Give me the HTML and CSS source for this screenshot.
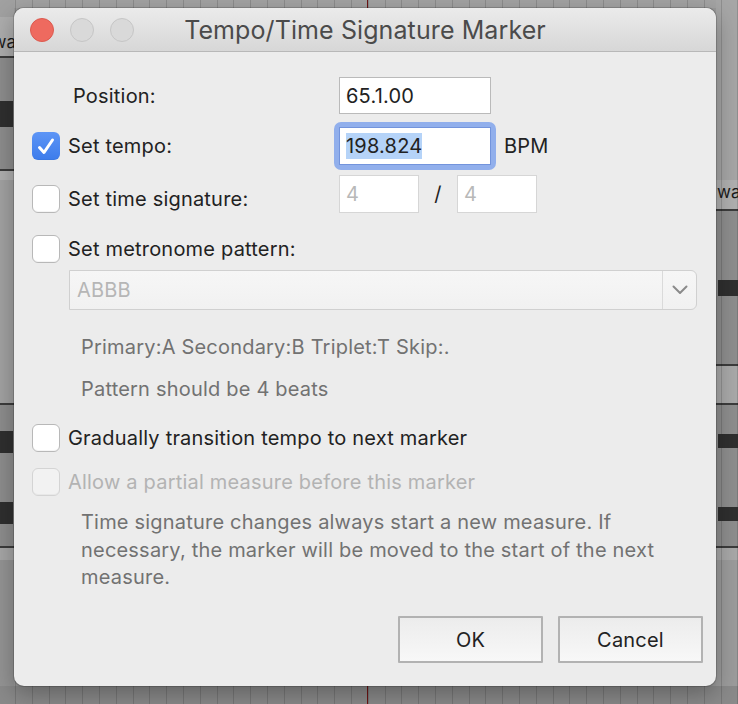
FILE: index.html
```html
<!DOCTYPE html>
<html lang="en">
<head>
<meta charset="UTF-8">
<meta name="viewport" content="width=device-width, initial-scale=1.0">
<title>Tempo/Time Signature Marker</title>
<link rel="stylesheet" href="styles.css">
</head>
<body>

<span class="item-name item-left">L.wav</span>
<span class="item-name item-right">wav</span>

<div class="dialog">
    <div class="titlebar">
        <div class="lights">
            <span class="light close"></span>
            <span class="light"></span>
            <span class="light"></span>
        </div>
        <div class="title">Tempo/Time Signature Marker</div>
        <div></div>
    </div>

    <div class="content">
        <div class="row row-position">
            <div class="lead"><span class="label plain">Position:</span></div>
            <div class="field">65.1.00</div>
        </div>

        <div class="row row-tempo">
            <div class="lead">
                <span class="check on">
                    <svg width="28" height="28" viewBox="0 0 28 28"><path d="M7.5 15.5 L12 20.5 L20.5 8" fill="none" stroke="#fff" stroke-width="3" stroke-linecap="round" stroke-linejoin="round"/></svg>
                </span>
                <span class="label">Set tempo:</span>
            </div>
            <div class="ring"><div class="field tall focus"><span class="sel">198.824</span></div></div>
            <span class="unit">BPM</span>
        </div>

        <div class="row row-sig">
            <div class="lead">
                <span class="check"></span>
                <span class="label">Set time signature:</span>
            </div>
            <div class="field tall small dim">4</div>
            <span class="slash">/</span>
            <div class="field tall small dim">4</div>
        </div>

        <div class="row row-metro">
            <div class="lead">
                <span class="check"></span>
                <span class="label">Set metronome pattern:</span>
            </div>
        </div>

        <div class="combo">
            <span class="combo-text">ABBB</span>
            <span class="combo-btn">
                <svg width="16" height="10" viewBox="0 0 16 10"><path d="M1.5 1.5 L8 8 L14.5 1.5" fill="none" stroke="#8a8a8a" stroke-width="2" stroke-linecap="round" stroke-linejoin="round"/></svg>
            </span>
        </div>

        <div class="hint first">Primary:A Secondary:B Triplet:T Skip:.</div>
        <div class="hint second">Pattern should be 4 beats</div>

        <div class="row row-gradual">
            <div class="lead wide">
                <span class="check"></span>
                <span class="label">Gradually transition tempo to next marker</span>
            </div>
        </div>

        <div class="row row-allow">
            <div class="lead wide">
                <span class="check off"></span>
                <span class="label disabled">Allow a partial measure before this marker</span>
            </div>
        </div>

        <p class="note">Time signature changes always start a new measure. If necessary, the marker will be moved to the start of the next measure.</p>

        <div class="buttons">
            <button type="button">OK</button>
            <button type="button">Cancel</button>
        </div>
    </div>
</div>

</body>
</html>
```

FILE: styles.css
```css
body {
    margin: 0;
    width: 738px;
    height: 704px;
    overflow: hidden;
    position: relative;
    font-family: Inter, "Noto Sans", sans-serif;
    background:
        /* play cursor */
        linear-gradient(#6e1414, #6e1414) 367px 0 / 1px 100% no-repeat,
        /* waveform blobs on the edges */
        linear-gradient(#2f2f2f, #2f2f2f) 0 101px / 13px 26px no-repeat,
        linear-gradient(#2f2f2f, #2f2f2f) 0 431px / 13px 22px no-repeat,
        linear-gradient(#2f2f2f, #2f2f2f) 0 502px / 13px 22px no-repeat,
        linear-gradient(#2f2f2f, #2f2f2f) 718px 280px / 20px 16px no-repeat,
        linear-gradient(#2f2f2f, #2f2f2f) 718px 434px / 20px 14px no-repeat,
        linear-gradient(#2f2f2f, #2f2f2f) 718px 507px / 20px 14px no-repeat,
        /* grid */
        repeating-linear-gradient(to right, transparent 0, transparent 15px, rgba(0, 0, 0, 0.14) 15px, rgba(0, 0, 0, 0.14) 16px, transparent 16px, transparent 16.8px),
        /* left track column */
        linear-gradient(#a1a1a1 0, #a1a1a1 17px, #adadad 17px, #adadad 56px, #3c3c3c 56px, #3c3c3c 58px,
            #8d8d8d 58px, #8d8d8d 169px, #3c3c3c 169px, #3c3c3c 171px, #b0b0b0 171px, #b0b0b0 180px,
            #a2a2a2 180px, #a2a2a2 403px, #3c3c3c 403px, #3c3c3c 405px, #8d8d8d 405px, #8d8d8d 546px,
            #3c3c3c 546px, #3c3c3c 548px, #a6a6a6 548px, #a6a6a6 560px, #949494 560px, #949494 686px,
            #8a8a8a 686px) 0 0 / 14px 100% no-repeat,
        /* right track column */
        linear-gradient(#a6a6a6 0, #a6a6a6 180px, #b0b0b0 180px, #b0b0b0 209px, #3c3c3c 209px, #3c3c3c 211px,
            #8e8e8e 211px, #8e8e8e 364px, #3c3c3c 364px, #3c3c3c 366px, #a9a9a9 366px, #a9a9a9 403px,
            #3c3c3c 403px, #3c3c3c 405px, #8e8e8e 405px, #8e8e8e 546px, #3c3c3c 546px, #3c3c3c 548px,
            #a8a8a8 548px, #a8a8a8 560px, #9c9c9c 560px, #9c9c9c 686px, #8a8a8a 686px) 716px 0 / 22px 100% no-repeat,
        linear-gradient(#a3a3a3 0, #a3a3a3 8px, #999 8px, #999 686px, #8a8a8a 686px);
}

.item-name {
    position: absolute;
    font-size: 17px;
    color: #1a1a1a;
}

.item-left {
    left: -22px;
    top: 32px;
}

.item-right {
    left: 717px;
    top: 182px;
}

.dialog {
    position: relative;
    margin: 8px 0 0 14px;
    width: 702px;
    height: 678px;
    border-radius: 10px;
    background-color: #ececec;
    box-shadow: 0 0 0 1px rgba(0, 0, 0, 0.16), 0 8px 24px rgba(0, 0, 0, 0.3);
    display: flex;
    flex-direction: column;
    letter-spacing: 0.2px;
}

.titlebar {
    height: 43px;
    border-bottom: 1px solid #b8b8b8;
    border-radius: 10px 10px 0 0;
    background: linear-gradient(#ebebeb, #d7d7d7);
    display: grid;
    grid-template-columns: 1fr auto 1fr;
    align-items: center;
}

.lights {
    display: flex;
    gap: 16px;
    padding-left: 16px;
}

.light {
    width: 22px;
    height: 22px;
    border-radius: 50%;
    background-color: #d9d9d9;
    border: 1px solid #c6c6c6;
}

.light.close {
    background-color: #ee6a5f;
    border-color: #dc5a4f;
}

.title {
    font-size: 25px;
    color: #4b4b4b;
    letter-spacing: 0.1px;
}

.content {
    flex: 1;
    padding: 25px 13px 23px 18px;
    display: flex;
    flex-direction: column;
}

.row {
    display: flex;
    align-items: center;
}

.lead {
    width: 307px;
    flex-shrink: 0;
    display: flex;
    align-items: center;
    gap: 8px;
}

.lead.wide {
    width: auto;
}

.label {
    font-size: 20px;
    color: #222;
    white-space: nowrap;
}

.label.plain {
    padding-left: 41px;
}

.label.disabled {
    color: #b3b3b3;
}

.check {
    width: 28px;
    height: 28px;
    box-sizing: border-box;
    border-radius: 6px;
    border: 1px solid #b8b8b8;
    background-color: #fff;
    box-shadow: inset 0 -1px 0 rgba(0, 0, 0, 0.04);
    flex-shrink: 0;
}

.check.on {
    border: none;
    background: linear-gradient(#5d95f6, #3d7ceb);
}

.check.on svg {
    display: block;
}

.check.off {
    background-color: #f2f2f2;
    border-color: #d4d4d4;
}

.field {
    width: 152px;
    height: 37px;
    box-sizing: border-box;
    border: 1px solid #bababa;
    background-color: #fff;
    padding-left: 6px;
    display: flex;
    align-items: center;
    font-size: 20px;
    color: #222;
}

.field.tall {
    height: 38px;
}

.field.small {
    width: 80px;
    border-color: #d6d6d6;
}

.field.dim {
    color: #b8b8b8;
}

.ring {
    margin: -5px;
    padding: 5px;
    border-radius: 7px;
    background-color: #91afec;
}

.field.focus {
    border-color: #7394dc;
}

.sel {
    background-color: #b5d3f8;
    line-height: 26px;
}

.unit {
    margin-left: 13px;
    font-size: 20px;
    color: #222;
}

.slash {
    width: 38px;
    text-align: center;
    font-size: 20px;
    color: #222;
}

.row-tempo {
    margin-top: 13px;
}

.row-sig {
    margin-top: 10px;
}

.row-sig .lead {
    margin-top: 10px;
}

.row-metro {
    margin-top: 22px;
}

.combo {
    margin: 7px 0 0 37px;
    width: 628px;
    height: 40px;
    box-sizing: border-box;
    border: 1px solid #d0d0d0;
    border-radius: 0 6px 6px 0;
    background: linear-gradient(#f6f6f6, #f1f1f1);
    display: flex;
    align-items: center;
}

.combo-text {
    flex: 1;
    padding-left: 7px;
    font-size: 20px;
    color: #b6b6b6;
}

.combo-btn {
    width: 33px;
    height: 100%;
    border-left: 1px solid #dadada;
    display: flex;
    align-items: center;
    justify-content: center;
}

.hint {
    margin-left: 49px;
    font-size: 20px;
    line-height: 28px;
    color: #727272;
}

.hint.first {
    margin-top: 23px;
}

.hint.second {
    margin-top: 14px;
}

.row-gradual {
    margin-top: 21px;
}

.row-allow {
    margin-top: 16px;
}

.note {
    margin: 13px 0 0 49px;
    width: 616px;
    font-size: 20px;
    line-height: 27.5px;
    color: #727272;
}

.buttons {
    margin-top: auto;
    display: flex;
    justify-content: flex-end;
    gap: 15px;
}

button {
    width: 145px;
    height: 47px;
    border: 2px solid #b2b2b2;
    border-radius: 1px;
    background: linear-gradient(#ececec, #f8f8f8);
    font-family: Inter, "Noto Sans", sans-serif;
    font-size: 20px;
    letter-spacing: 0.2px;
    color: #222;
    padding: 0;
}
```
